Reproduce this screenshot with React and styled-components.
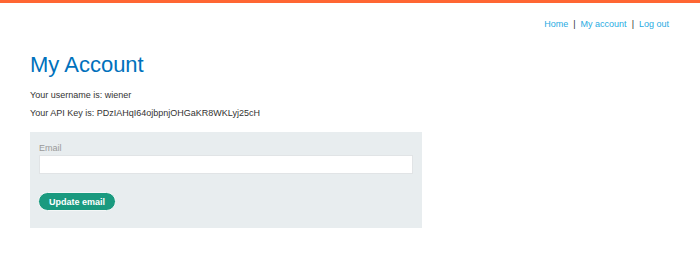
import React from "react";
import styled, { createGlobalStyle } from "styled-components";

const GlobalStyle = createGlobalStyle`
  body {
    margin: 0;
    background: #fff;
    font-family: "Liberation Sans", Arial, sans-serif;
    color: #333332;
  }
`;

const Page = styled.div`
  width: 700px;
  min-height: 280px;
`;

const TopBar = styled.div`
  height: 3px;
  background: #ff6633;
`;

const Header = styled.header`
  display: flex;
  justify-content: flex-end;
  padding: 14px 31px 0 0;
  height: 28px;
  box-sizing: border-box;
`;

const Nav = styled.nav`
  display: flex;
  align-items: center;
  gap: 5px;
  font-size: 9px;
  line-height: 12px;
`;

const NavLink = styled.a`
  color: #29abe2;
  text-decoration: none;
`;

const Sep = styled.span`
  color: #333;
`;

const Main = styled.main`
  padding: 21px 0 0 30px;
`;

const Title = styled.h1`
  margin: 0 0 12px;
  font-size: 22px;
  line-height: 26px;
  font-weight: 400;
  color: #0071bc;
`;

const Line = styled.p`
  margin: 0 0 7px;
  font-size: 9px;
  line-height: 11px;
`;

const Panel = styled.form`
  margin-top: 13px;
  width: 392px;
  height: 96px;
  box-sizing: border-box;
  background: #e8edef;
  padding: 10px 9px 0;
  display: flex;
  flex-direction: column;
  align-items: flex-start;
`;

const Label = styled.label`
  font-size: 9px;
  line-height: 12px;
  color: #999;
  margin-bottom: 1px;
`;

const Input = styled.input`
  width: 374px;
  height: 19px;
  box-sizing: border-box;
  border: 1px solid #e1e4e6;
  background: #fff;
  margin: 0 0 18px;
  padding: 0 6px;
  outline: none;
`;

const Button = styled.button`
  height: 19px;
  margin: 0 0 0 -1px;
  padding: 0 10px;
  border: 1px solid #f4f7f7;
  border-radius: 10px;
  background: #1a9a7f;
  color: #fff;
  font-family: "Liberation Sans", Arial, sans-serif;
  font-size: 9px;
  font-weight: 700;
`;

export default function App() {
  return (
    <Page>
      <GlobalStyle />
      <TopBar />
      <Header>
        <Nav>
          <NavLink href="#">Home</NavLink>
          <Sep>|</Sep>
          <NavLink href="#">My account</NavLink>
          <Sep>|</Sep>
          <NavLink href="#">Log out</NavLink>
        </Nav>
      </Header>
      <Main>
        <Title>My Account</Title>
        <Line>Your username is: wiener</Line>
        <Line>Your API Key is: PDzIAHqI64ojbpnjOHGaKR8WKLyj25cH</Line>
        <Panel onSubmit={(e) => e.preventDefault()}>
          <Label htmlFor="email">Email</Label>
          <Input id="email" type="email" />
          <Button type="submit">Update email</Button>
        </Panel>
      </Main>
    </Page>
  );
}
